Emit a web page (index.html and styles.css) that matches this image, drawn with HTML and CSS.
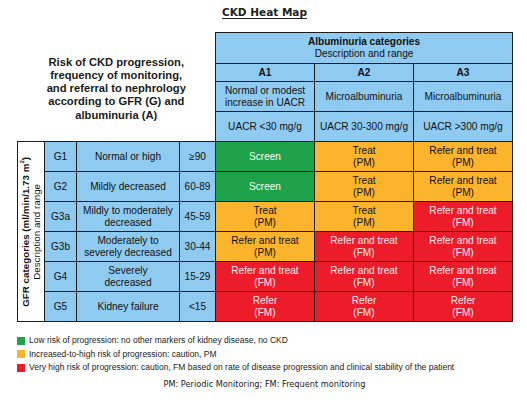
FILE: index.html
```html
<!DOCTYPE html>
<html lang="en">
<head>
    <meta charset="UTF-8">
    <meta name="viewport" content="width=device-width, initial-scale=1.0">
    <title>CKD Heat Map</title>
    <link rel="stylesheet" href="styles.css">
</head>
<body>
    <div class="sheet">
        <h1 class="page-title"><span>CKD Heat Map</span></h1>
        <table class="heat-map">
            <colgroup>
                <col class="c-label">
                <col class="c-stage">
                <col class="c-desc">
                <col class="c-range">
                <col class="c-a">
                <col class="c-a">
                <col class="c-a">
            </colgroup>
            <tr class="row-cat">
                <td class="intro" colspan="4" rowspan="4">
                    Risk of CKD progression,<br>frequency of monitoring,<br>and referral to nephrology<br>according to GFR (G) and<br>albuminuria (A)
                </td>
                <th class="blue" colspan="3"><b>Albuminuria categories</b><br>Description and range</th>
            </tr>
            <tr class="row-a">
                <th class="blue">A1</th>
                <th class="blue">A2</th>
                <th class="blue">A3</th>
            </tr>
            <tr class="row-std">
                <td class="blue">Normal or modest<br>increase in UACR</td>
                <td class="blue">Microalbuminuria</td>
                <td class="blue">Microalbuminuria</td>
            </tr>
            <tr class="row-std">
                <td class="blue">UACR &lt;30 mg/g</td>
                <td class="blue">UACR 30-300 mg/g</td>
                <td class="blue">UACR &gt;300 mg/g</td>
            </tr>
            <tr class="row-std">
                <td class="gfr-label" rowspan="6">
                    <div class="vertical"><b>GFR categories (ml/min/1.73 m<sup>2</sup>)</b><br>Description and range</div>
                </td>
                <td class="blue">G1</td>
                <td class="blue">Normal or high</td>
                <td class="blue">&ge;90</td>
                <td class="green">Screen</td>
                <td class="orange">Treat<br>(PM)</td>
                <td class="orange">Refer and treat<br>(PM)</td>
            </tr>
            <tr class="row-std">
                <td class="blue">G2</td>
                <td class="blue">Mildly decreased</td>
                <td class="blue">60-89</td>
                <td class="green">Screen</td>
                <td class="orange">Treat<br>(PM)</td>
                <td class="orange">Refer and treat<br>(PM)</td>
            </tr>
            <tr class="row-std">
                <td class="blue">G3a</td>
                <td class="blue">Mildly to moderately<br>decreased</td>
                <td class="blue">45-59</td>
                <td class="orange">Treat<br>(PM)</td>
                <td class="orange">Treat<br>(PM)</td>
                <td class="red">Refer and treat<br>(FM)</td>
            </tr>
            <tr class="row-std">
                <td class="blue">G3b</td>
                <td class="blue">Moderately to<br>severely decreased</td>
                <td class="blue">30-44</td>
                <td class="orange">Refer and treat<br>(PM)</td>
                <td class="red">Refer and treat<br>(FM)</td>
                <td class="red">Refer and treat<br>(FM)</td>
            </tr>
            <tr class="row-std">
                <td class="blue">G4</td>
                <td class="blue">Severely<br>decreased</td>
                <td class="blue">15-29</td>
                <td class="red">Refer and treat<br>(FM)</td>
                <td class="red">Refer and treat<br>(FM)</td>
                <td class="red">Refer and treat<br>(FM)</td>
            </tr>
            <tr class="row-std">
                <td class="blue">G5</td>
                <td class="blue">Kidney failure</td>
                <td class="blue">&lt;15</td>
                <td class="red">Refer<br>(FM)</td>
                <td class="red">Refer<br>(FM)</td>
                <td class="red">Refer<br>(FM)</td>
            </tr>
        </table>

        <ul class="legend">
            <li><span class="swatch green"></span>Low risk of progression: no other markers of kidney disease, no CKD</li>
            <li><span class="swatch orange"></span>Increased-to-high risk of progression: caution, PM</li>
            <li><span class="swatch red"></span>Very high risk of progression: caution, FM based on rate of disease progression and clinical stability of the patient</li>
        </ul>
        <p class="footnote">PM: Periodic Monitoring; FM: Frequent monitoring</p>
    </div>
</body>
</html>
```

FILE: styles.css
```css
body {
    margin: 0;
    background-color: #fff;
    font-family: "Liberation Sans", Arial, sans-serif;
    color: #111;
}
.sheet {
    width: 495px;
    margin-left: 17px;
}
.page-title {
    margin: 5px 0 13px;
    font-family: "DejaVu Sans", sans-serif;
    font-size: 10.5px;
    line-height: 14px;
    font-weight: bold;
    text-align: center;
    color: #222;
}
.page-title span {
    text-decoration: underline;
    text-underline-offset: 2px;
}
.heat-map {
    width: 495px;
    table-layout: fixed;
    border-collapse: collapse;
    font-size: 10.1px;
    line-height: 11.6px;
}
.c-label { width: 27px; }
.c-stage { width: 32px; }
.c-desc { width: 103px; }
.c-range { width: 36px; }
.c-a { width: 99px; }
.row-cat { height: 31px; }
.row-a { height: 18px; }
.row-std { height: 30px; }
th, td {
    border: 1px solid #1c1c1c;
    padding: 0;
    text-align: center;
    vertical-align: middle;
}
th {
    font-weight: bold;
}
.row-cat th {
    font-weight: normal;
}
.intro {
    border-top: none;
    border-left: none;
    background-color: #fff;
    font-size: 11.2px;
    line-height: 13.3px;
    font-weight: bold;
    color: #1a1a1a;
    padding-top: 4px;
}
.blue {
    background-color: #8fcbf0;
}
.green {
    background-color: #1ea34b;
    color: #f2fff4;
}
.orange {
    background-color: #fdb42d;
    color: #111;
}
.red {
    background-color: #ed1c2a;
    color: #fde8ea;
}
.gfr-label {
    background-color: #fff;
}
.vertical {
    writing-mode: vertical-rl;
    transform: rotate(180deg);
    margin: 0 auto;
    font-size: 9.8px;
    line-height: 10.5px;
    white-space: nowrap;
}
.vertical sup {
    font-size: 6px;
    line-height: 0;
}
.legend {
    list-style: none;
    margin: 12px 0 0;
    padding: 0;
    font-size: 8.5px;
    line-height: 13.5px;
    color: #1a1a1a;
}
.legend li {
    display: flex;
    align-items: center;
    gap: 4px;
}
.swatch {
    width: 8px;
    height: 8px;
    flex-shrink: 0;
}
.footnote {
    margin: 3px 0 0;
    text-align: center;
    font-family: "DejaVu Sans", sans-serif;
    font-size: 8.2px;
    line-height: 12px;
    color: #1a1a1a;
}
```
